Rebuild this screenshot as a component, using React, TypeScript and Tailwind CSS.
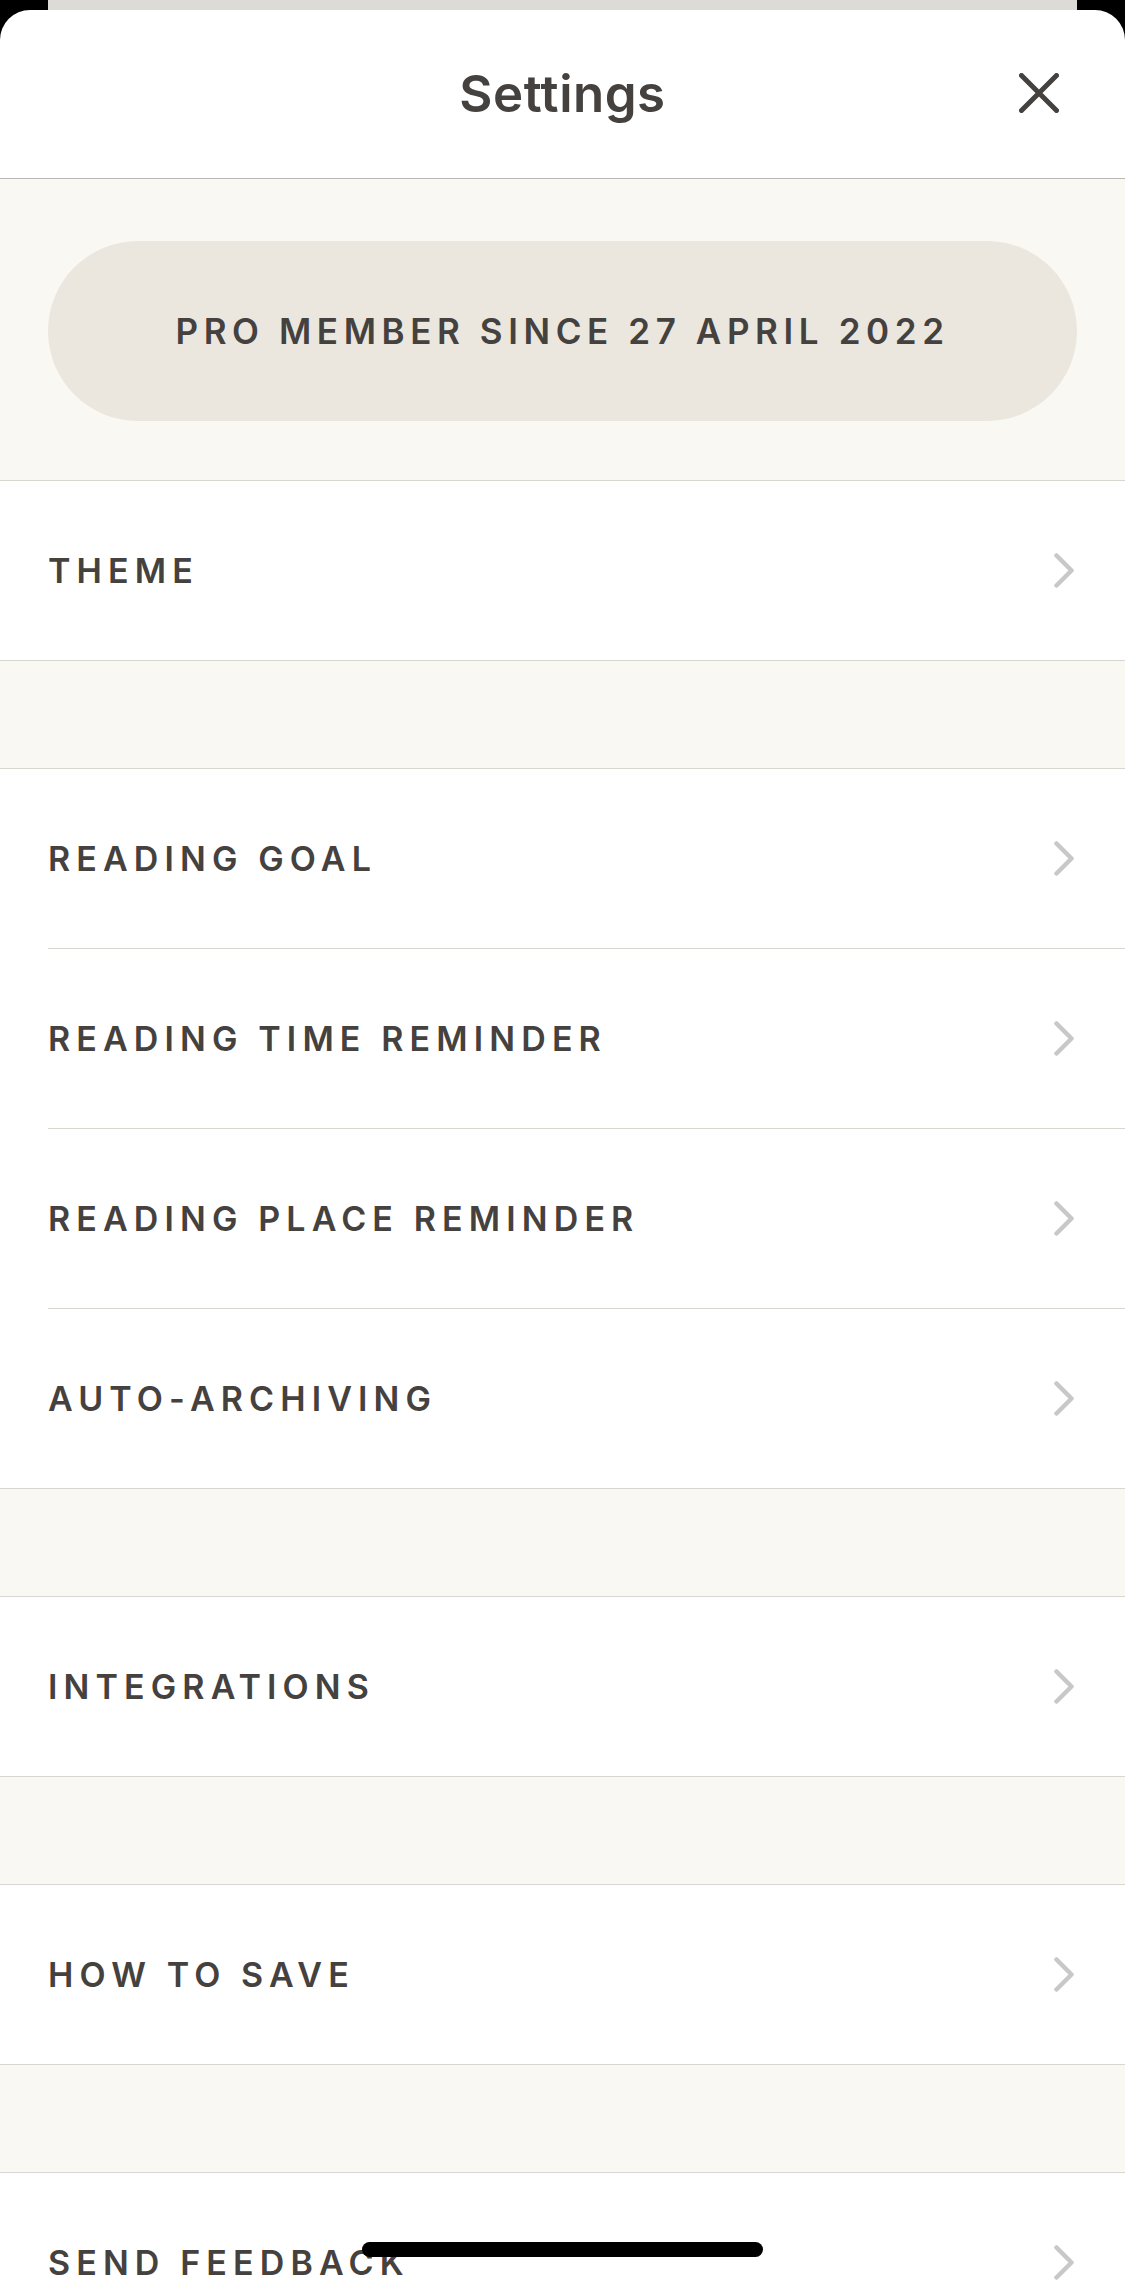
const groups = [
    ["THEME"],
    ["READING GOAL", "READING TIME REMINDER", "READING PLACE REMINDER", "AUTO-ARCHIVING"],
    ["INTEGRATIONS"],
    ["HOW TO SAVE"],
    ["SEND FEEDBACK"]
];

const Chevron = () => (
    <svg width="20" height="35" viewBox="0 0 20 35" fill="none">
        <path d="M2.5 2.5 L17.5 17.5 L2.5 32.5" stroke="#c8c8c8" strokeWidth="4.5" strokeLinecap="round" strokeLinejoin="round" />
    </svg>
);

const CloseIcon = () => (
    <svg width="40" height="40" viewBox="0 0 40 40" fill="none">
        <path d="M2.5 2.5 L37.5 37.5 M37.5 2.5 L2.5 37.5" stroke="#45413e" strokeWidth="5" strokeLinecap="round" />
    </svg>
);

const Row = ({ label, last }: { label: string; last: boolean }) => (
    <div className="pl-[48px]">
        <div className={`flex items-center justify-between pr-[51px] ${last ? "h-[179px]" : "h-[180px] border-b border-[#d8d6d1]"}`}>
            <span className="text-[34px] font-semibold tracking-[0.18em] text-[#45413e]">{label}</span>
            <Chevron />
        </div>
    </div>
);

const App = () => {
    return (
        <div className="relative h-[2284px] overflow-hidden bg-black font-['Inter',sans-serif]">
            {/* Card behind */}
            <div className="h-[10px] px-[48px]">
                <div className="h-full bg-[#dcdbd6]" />
            </div>

            <div className="rounded-t-[30px] bg-white">
                {/* Header */}
                <div className="relative flex h-[169px] items-center justify-center border-b border-[#b9b7b2]">
                    <h1 className="text-[51px] font-semibold tracking-[0.01em] text-[#45413e]">Settings</h1>
                    <button className="absolute right-[66px] top-[63px]">
                        <CloseIcon />
                    </button>
                </div>

                {/* Pro banner */}
                <div className="border-b border-[#d8d6d1] bg-[#f9f8f3] px-[48px] pt-[62px] pb-[59px]">
                    <div className="flex h-[180px] items-center justify-center rounded-full bg-[#ebe7df]">
                        <span className="text-[35px] font-semibold tracking-[0.16em] text-[#45413e]">PRO MEMBER SINCE 27 APRIL 2022</span>
                    </div>
                </div>

                {/* Rows */}
                {groups.map((group, gi) => (
                    <div key={gi}>
                        {gi > 0 && <div className="h-[108px] border-b border-[#d8d6d1] bg-[#f9f8f3]" />}
                        <div className={gi < groups.length - 1 ? "border-b border-[#d8d6d1]" : ""}>
                            {group.map((label, i) => (
                                <Row key={label} label={label} last={i === group.length - 1} />
                            ))}
                        </div>
                    </div>
                ))}
            </div>

            {/* Home indicator */}
            <div className="absolute left-[362px] top-[2242px] h-[15px] w-[401px] rounded-full bg-black" />
        </div>
    );
};

export default App;
